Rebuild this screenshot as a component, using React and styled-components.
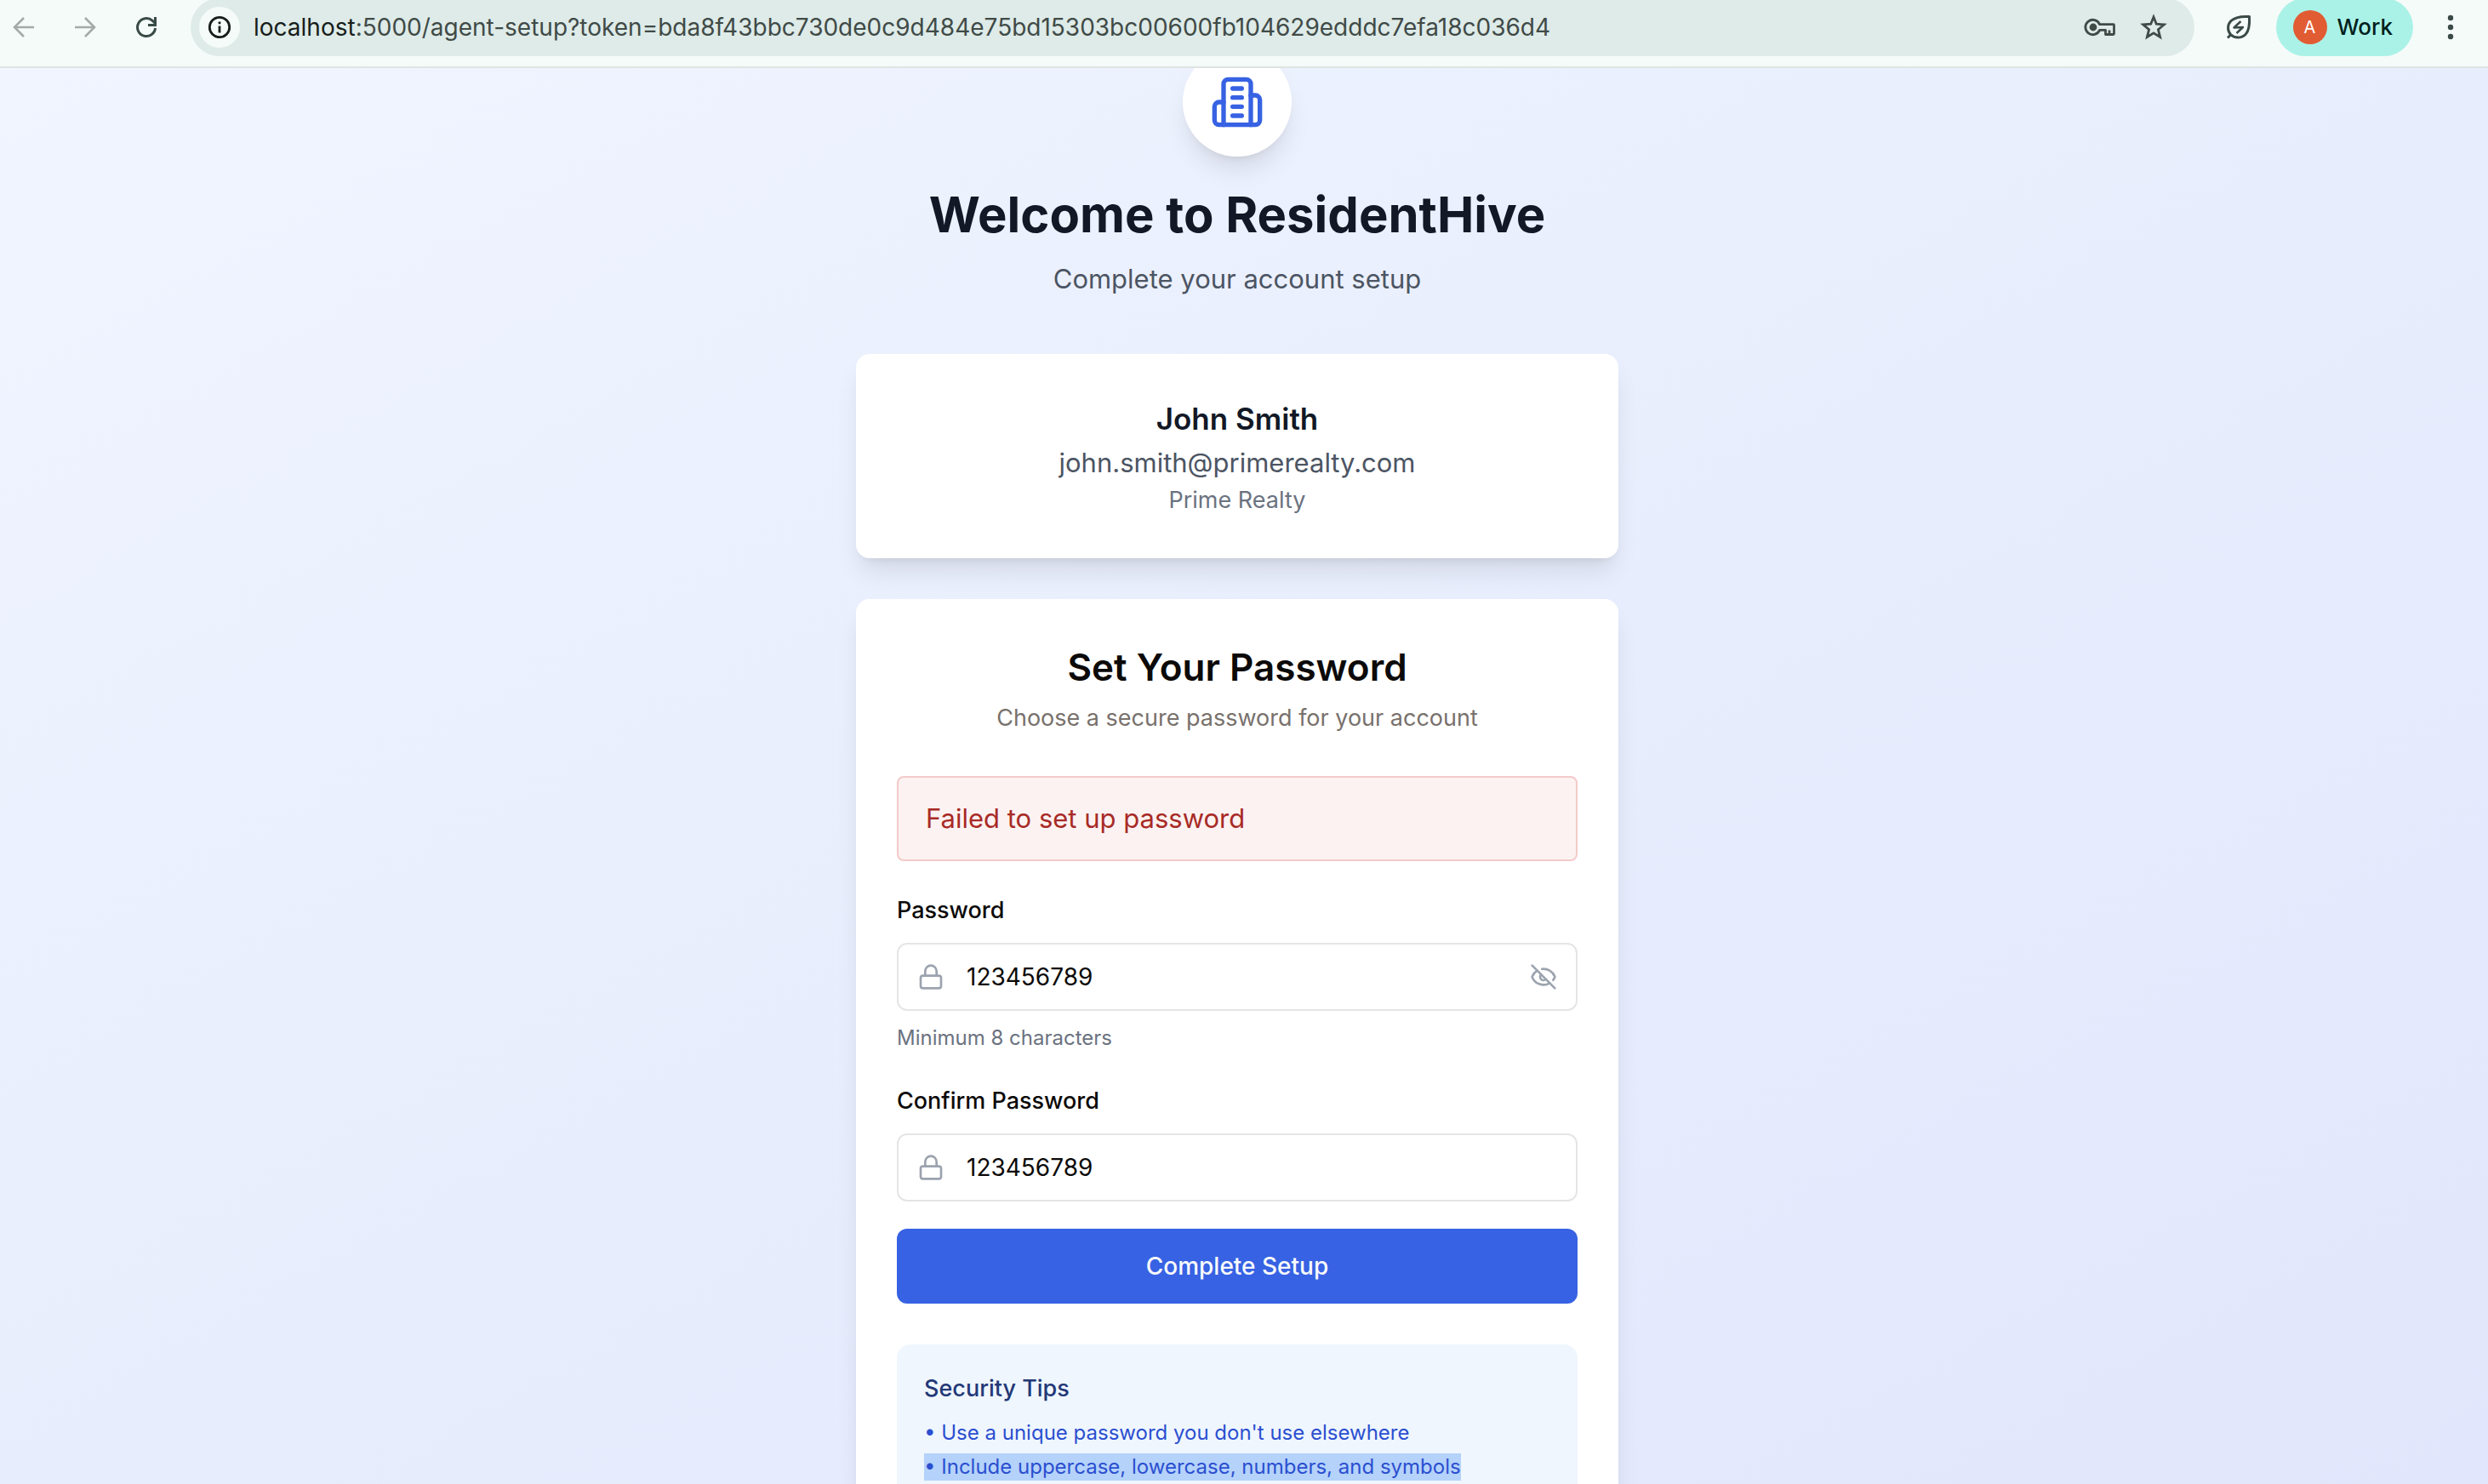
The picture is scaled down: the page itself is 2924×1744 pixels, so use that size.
import React, { useState } from "react";
import styled, { createGlobalStyle } from "styled-components";
import { Lock, EyeOff, Eye } from "lucide-react";

const GlobalStyle = createGlobalStyle`
  *, *::before, *::after { box-sizing: border-box; }
  html, body { margin: 0; padding: 0; overflow: hidden; }
  body { font-family: Inter, "Liberation Sans", sans-serif; -webkit-font-smoothing: antialiased; }
  h1, h2, h3, p, ul { margin: 0; padding: 0; }
  button, input { font-family: inherit; }
`;

const Shell = styled.div`
  display: flex;
  flex-direction: column;
  height: 100vh;
  overflow: hidden;
`;

const Toolbar = styled.header`
  display: flex;
  align-items: center;
  flex: none;
  height: 80px;
  padding: 0 28px 14px 12px;
  background: #f5fbf9;
  border-bottom: 2px solid #dde4e1;
`;

const IconButton = styled.button`
  display: grid;
  place-items: center;
  width: ${(p) => (p.$wide ? "38px" : "32px")};
  height: 32px;
  padding: 0;
  border: 0;
  background: transparent;
  color: ${(p) => p.$color || "#3a4a47"};
`;

const NavGroup = styled.nav`
  display: flex;
  gap: 40px;
  margin-right: 36px;
`;

const AddressBar = styled.div`
  display: flex;
  align-items: center;
  flex: 1;
  height: 68px;
  padding: 0 32px 0 10px;
  border-radius: 34px;
  background: #deebe8;
`;

const SiteInfo = styled.button`
  display: grid;
  place-items: center;
  width: 48px;
  height: 48px;
  margin-right: 16px;
  padding: 0;
  border: 0;
  border-radius: 50%;
  background: #f5fbf9;
  color: #171d1b;
`;

const Url = styled.a`
  flex: 1;
  min-width: 0;
  overflow: hidden;
  white-space: nowrap;
  font-size: 28px;
  line-height: 40px;
  color: #404a47;
  text-decoration: none;
`;

const Host = styled.span`
  color: #171d1b;
`;

const AddressActions = styled.div`
  display: flex;
  gap: 28px;
`;

const ToolbarEnd = styled.div`
  display: flex;
  align-items: center;
  gap: 28px;
  margin-left: 36px;
`;

const ProfileButton = styled.button`
  display: flex;
  align-items: center;
  gap: 12px;
  height: 68px;
  padding: 0 24px 0 20px;
  border: 0;
  border-radius: 34px;
  background: #aaf2e7;
  color: #00201c;
  font-size: 26px;
  font-weight: 500;
  line-height: 40px;
`;

const Avatar = styled.span`
  display: grid;
  place-items: center;
  width: 40px;
  height: 40px;
  border-radius: 50%;
  background: #e25c33;
  color: #fff;
  font-size: 20px;
  font-weight: 400;
`;

const Page = styled.main`
  display: flex;
  flex: 1;
  justify-content: center;
  min-height: 0;
  padding: 0 48px 0 32px;
  overflow: hidden;
  background: linear-gradient(to bottom right, #f0f5ff, #e1e6fc);
`;

const Column = styled.div`
  display: flex;
  flex-direction: column;
  width: 100%;
  max-width: 896px;
  margin-top: -24px;
`;

const Intro = styled.div`
  display: flex;
  flex-direction: column;
  align-items: center;
  margin-bottom: 64px;
  text-align: center;
`;

const Badge = styled.div`
  display: grid;
  place-items: center;
  width: 128px;
  height: 128px;
  margin-bottom: 32px;
  border-radius: 50%;
  background: #fff;
  color: #3762e3;
  box-shadow: 0 20px 30px -6px rgba(0, 0, 0, 0.1), 0 8px 12px -8px rgba(0, 0, 0, 0.1);
`;

const PageTitle = styled.h1`
  margin-bottom: 16px;
  font-size: 58px;
  font-weight: 700;
  line-height: 72px;
  color: #121826;
`;

const Lead = styled.p`
  font-size: 31px;
  line-height: 48px;
  color: #4c5563;
`;

const Card = styled.section`
  flex: none;
  padding: 48px;
  border-radius: 16px;
  background: #fff;
  box-shadow: 0 20px 30px -6px rgba(0, 0, 0, 0.1), 0 8px 12px -8px rgba(0, 0, 0, 0.1);
  & + & { margin-top: 48px; }
`;

const CenteredText = styled.div`
  text-align: center;
`;

const AgentName = styled.h2`
  font-size: 35px;
  font-weight: 600;
  line-height: 56px;
  color: #121826;
`;

const Small = styled.p`
  font-size: 27px;
  line-height: 40px;
  color: ${(p) => p.$color};
`;

const CardTitle = styled.h2`
  margin-bottom: 8px;
  font-size: 44px;
  font-weight: 600;
  line-height: 64px;
  color: #0c0a09;
`;

const ErrorAlert = styled.div`
  margin-top: 48px;
  padding: 24px 32px;
  border: 2px solid #f4caca;
  border-radius: 8px;
  background: #fcf2f1;
  color: #a82a26;
  font-size: 31px;
  line-height: 48px;
`;

const Form = styled.form`
  display: flex;
  flex-direction: column;
  gap: 32px;
  margin-top: 32px;
`;

const Label = styled.label`
  display: block;
  margin-bottom: 12px;
  font-size: 27px;
  font-weight: 500;
  line-height: 52px;
  color: #0c0a09;
`;

const InputBox = styled.div`
  display: flex;
  align-items: center;
  gap: 26px;
  height: 80px;
  padding: 0 22px;
  border: 2px solid #e5e5e5;
  border-radius: 12px;
  background: #fff;
  color: #9ca3af;
`;

const TextInput = styled.input`
  flex: 1;
  min-width: 0;
  padding: 0;
  border: 0;
  outline: 0;
  background: transparent;
  color: #0c0a09;
  font-size: 28px;
  line-height: 40px;
`;

const Hint = styled.p`
  margin-top: 16px;
  font-size: 24px;
  line-height: 32px;
  color: #6b7280;
`;

const SubmitButton = styled.button`
  height: 88px;
  border: 0;
  border-radius: 12px;
  background: #3762e3;
  color: #f8fafc;
  font-size: 28px;
  font-weight: 500;
  line-height: 40px;
`;

const Tips = styled.aside`
  margin-top: 48px;
  padding: 32px;
  border-radius: 16px;
  background: #eff6fe;
`;

const TipsTitle = styled.h3`
  margin-bottom: 16px;
  font-size: 27px;
  font-weight: 500;
  line-height: 40px;
  color: #233876;
`;

const TipList = styled.ul`
  display: flex;
  flex-direction: column;
  align-items: flex-start;
  gap: 8px;
  list-style: none;
`;

const Tip = styled.li`
  font-size: 24px;
  line-height: 32px;
  color: #2b4fd0;
  background: ${(p) => (p.$selected ? "#b4d2fa" : "transparent")};
`;

const ArrowIcon = ({ forward }) => (
  <svg width="28" height="28" viewBox="0 0 28 28" fill="none" stroke="currentColor" strokeWidth="2.6">
    {forward ? <path d="M2 14h22M14 3l11 11-11 11" /> : <path d="M26 14H4M14 3L3 14l11 11" />}
  </svg>
);

const ReloadIcon = () => (
  <svg width="28" height="28" viewBox="0 0 28 28" fill="none" stroke="currentColor" strokeWidth="3">
    <path d="M24.5 15A10.5 10.5 0 1 1 21 6.2L24 9" />
    <path d="M24.5 2v9.5H16" />
  </svg>
);

const InfoIcon = () => (
  <svg width="28" height="28" viewBox="0 0 28 28" fill="none" stroke="currentColor" strokeWidth="2.8">
    <circle cx="14" cy="14" r="11.7" />
    <path d="M14 12.5v8" />
    <circle cx="14" cy="8.8" r="1.6" fill="currentColor" stroke="none" />
  </svg>
);

const KeyIcon = () => (
  <svg width="38" height="24" viewBox="0 0 38 24" fill="none" stroke="currentColor" strokeWidth="2.8" strokeLinejoin="round">
    <path d="M18.6 8.6A8.700 8.700 0 1 0 18.6 15.4H25.5V20.5H34.5A1 1 0 0 0 35.5 19.5V9.6A1 1 0 0 0 34.5 8.6Z" />
    <path d="M30 20.5V15.5" />
    <circle cx="11" cy="12" r="4.4" fill="currentColor" stroke="none" />
  </svg>
);

const StarIcon = () => (
  <svg width="32" height="32" viewBox="0 0 32 32" fill="none" stroke="currentColor" strokeWidth="2.8">
    <path d="M16 4l3.300 8.200 9 .7-6.900 5.800 2.200 8.800L16 22.800l-7.600 4.700 2.200-8.800-6.900-5.800 9-.7z" />
  </svg>
);

const LeafIcon = () => (
  <svg width="32" height="32" viewBox="0 0 32 32" fill="none" stroke="currentColor" strokeWidth="3" strokeLinejoin="round">
    <path d="M28.500 3.500C20 3 12 3.500 7 8.500C2.500 13 2.500 20 6.500 24.500C11 29 19 29.500 24 24.500C28.500 20 29 12 28.500 3.500Z" />
    <path d="M7.500 24l-4.500 4.500" />
    <path d="M18.500 9l-8 7.500 10.500-.5-7.500 7" strokeWidth="2.5" />
  </svg>
);

const MenuIcon = () => (
  <svg width="8" height="32" viewBox="0 0 8 32" fill="currentColor">
    <circle cx="4" cy="5" r="3.2" />
    <circle cx="4" cy="16" r="3.2" />
    <circle cx="4" cy="27" r="3.2" />
  </svg>
);

const BuildingIcon = () => (
  <svg width="64" height="64" viewBox="0 0 24 24" fill="none" stroke="currentColor" strokeWidth="2" strokeLinecap="round" strokeLinejoin="round">
    <path d="M6 22V4a2 2 0 0 1 2-2h8a2 2 0 0 1 2 2v18Z" />
    <path d="M6 12H4a2 2 0 0 0-2 2v6a2 2 0 0 0 2 2h2" />
    <path d="M18 9h2a2 2 0 0 1 2 2v9a2 2 0 0 1-2 2h-2" />
    <path d="M10 6h4M10 10h4M10 14h4M10 18h4" />
  </svg>
);

function PasswordField({ id, label, hint, revealable }) {
  const [value, setValue] = useState("123456789");
  const [visible, setVisible] = useState(true);
  return (
    <div>
      <Label htmlFor={id}>{label}</Label>
      <InputBox>
        <Lock size={32} strokeWidth={2} />
        <TextInput
          id={id}
          type={visible ? "text" : "password"}
          value={value}
          onChange={(e) => setValue(e.target.value)}
        />
        {revealable && (
          <IconButton type="button" $color="#9ca3af" aria-label="Toggle password visibility" onClick={() => setVisible(!visible)}>
            {visible ? <EyeOff size={32} /> : <Eye size={32} />}
          </IconButton>
        )}
      </InputBox>
      {hint && <Hint>{hint}</Hint>}
    </div>
  );
}

export default function App() {
  return (
    <Shell>
      <GlobalStyle />
      <Toolbar>
        <NavGroup>
          <IconButton $color="#a3aba9" aria-label="Back"><ArrowIcon /></IconButton>
          <IconButton $color="#a3aba9" aria-label="Forward"><ArrowIcon forward /></IconButton>
          <IconButton aria-label="Reload"><ReloadIcon /></IconButton>
        </NavGroup>
        <AddressBar>
          <SiteInfo aria-label="Site information"><InfoIcon /></SiteInfo>
          <Url href="#">
            <Host>localhost</Host>:5000/agent-setup?token=bda8f43bbc730de0c9d484e75bd15303bc00600fb104629edddc7efa18c036d4
          </Url>
          <AddressActions>
            <IconButton $wide $color="#404a47" aria-label="Passwords"><KeyIcon /></IconButton>
            <IconButton $color="#404a47" aria-label="Bookmark"><StarIcon /></IconButton>
          </AddressActions>
        </AddressBar>
        <ToolbarEnd>
          <IconButton aria-label="Energy saver"><LeafIcon /></IconButton>
          <ProfileButton><Avatar>A</Avatar>Work</ProfileButton>
          <IconButton aria-label="Menu"><MenuIcon /></IconButton>
        </ToolbarEnd>
      </Toolbar>
      <Page>
        <Column>
          <Intro>
            <Badge><BuildingIcon /></Badge>
            <PageTitle>Welcome to ResidentHive</PageTitle>
            <Lead>Complete your account setup</Lead>
          </Intro>
          <Card>
            <CenteredText>
              <AgentName>John Smith</AgentName>
              <Lead>john.smith@primerealty.com</Lead>
              <Small $color="#6b7280">Prime Realty</Small>
            </CenteredText>
          </Card>
          <Card>
            <CenteredText>
              <CardTitle>Set Your Password</CardTitle>
              <Small $color="#78716c">Choose a secure password for your account</Small>
            </CenteredText>
            <ErrorAlert role="alert">Failed to set up password</ErrorAlert>
            <Form onSubmit={(e) => e.preventDefault()}>
              <PasswordField id="password" label="Password" hint="Minimum 8 characters" revealable />
              <PasswordField id="confirm" label="Confirm Password" />
              <SubmitButton type="submit">Complete Setup</SubmitButton>
            </Form>
            <Tips>
              <TipsTitle>Security Tips</TipsTitle>
              <TipList>
                <Tip>• Use a unique password you don't use elsewhere</Tip>
                <Tip $selected>• Include uppercase, lowercase, numbers, and symbols</Tip>
              </TipList>
            </Tips>
          </Card>
        </Column>
      </Page>
    </Shell>
  );
}
